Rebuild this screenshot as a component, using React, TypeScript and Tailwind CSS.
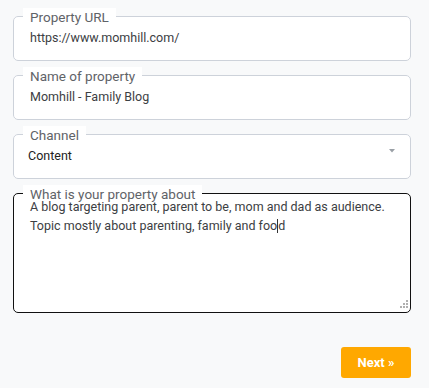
import React from "react";

function Field({ label, children }: { label: string; children: React.ReactNode }) {
  return (
    <fieldset className="h-[53px] rounded-[5px] border border-[#cdd2da] bg-white px-4 pt-[4px]">
      <legend className="ml-[-7px] bg-white px-[7px] pt-[3px] text-[13.5px] leading-[13px] text-[#5f6368]">{label}</legend>
      {children}
    </fieldset>
  );
}

export default function App() {
  return (
    <div className="min-h-[388px] w-[429px] bg-[#f8f9fa] pt-[8px]" style={{ fontFamily: "Roboto, 'Liberation Sans', sans-serif" }}>
      <div className="ml-[13px] flex w-[398px] flex-col gap-[6px]">
        <Field label="Property URL">
          <div className="text-[12.5px] leading-5 text-[#3c4043]">https://www.momhill.com/</div>
        </Field>
        <Field label="Name of property">
          <div className="text-[12.5px] leading-5 text-[#3c4043]">Momhill - Family Blog</div>
        </Field>
        <Field label="Channel">
          <div className="flex items-center justify-between">
            <div className="ml-[-2px] text-[12.5px] leading-5 text-[#222]">Content</div>
            <svg width="6" height="4" viewBox="0 0 6 4" className="mr-[-1px] mt-[-10px]">
              <path d="M0 0 L6 0 L3 3.5 Z" fill="#9aa0a6" />
            </svg>
          </div>
        </Field>
        <fieldset className="h-[128px] rounded-[5px] border border-[#111] bg-white px-4 pt-0">
          <legend className="ml-[-7px] bg-white px-[7px] pt-[3px] text-[13.5px] leading-[13px] text-[#5f6368]">What is your property about</legend>
          <div className="mt-[-4px] flex h-[111px] flex-col">
            <div className="text-[12.5px] leading-[19px] text-[#3c4043]">
              A blog targeting parent, parent to be, mom and dad as audience.
              <br />
              Topic mostly about parenting, family and foo
              <span className="inline-block h-[14px] w-px translate-y-[3px] bg-[#333]" />d
            </div>
            <svg width="8" height="8" viewBox="0 0 8 8" className="mr-[-14px] mt-auto self-end">
              <rect x="6" y="0" width="2" height="2" fill="#b0b0b0" />
              <rect x="3" y="3" width="2" height="2" fill="#b0b0b0" />
              <rect x="6" y="3" width="2" height="2" fill="#b0b0b0" />
              <rect x="0" y="6" width="2" height="2" fill="#b0b0b0" />
              <rect x="3" y="6" width="2" height="2" fill="#b0b0b0" />
              <rect x="6" y="6" width="2" height="2" fill="#b0b0b0" />
            </svg>
          </div>
        </fieldset>
      </div>
      <div className="mt-[34px] flex w-[411px] justify-end">
        <button className="flex h-[31px] w-[70px] items-center justify-center rounded-[3px] bg-[#ffa800] text-[13px] font-bold text-white">
          Next »
        </button>
      </div>
    </div>
  );
}
